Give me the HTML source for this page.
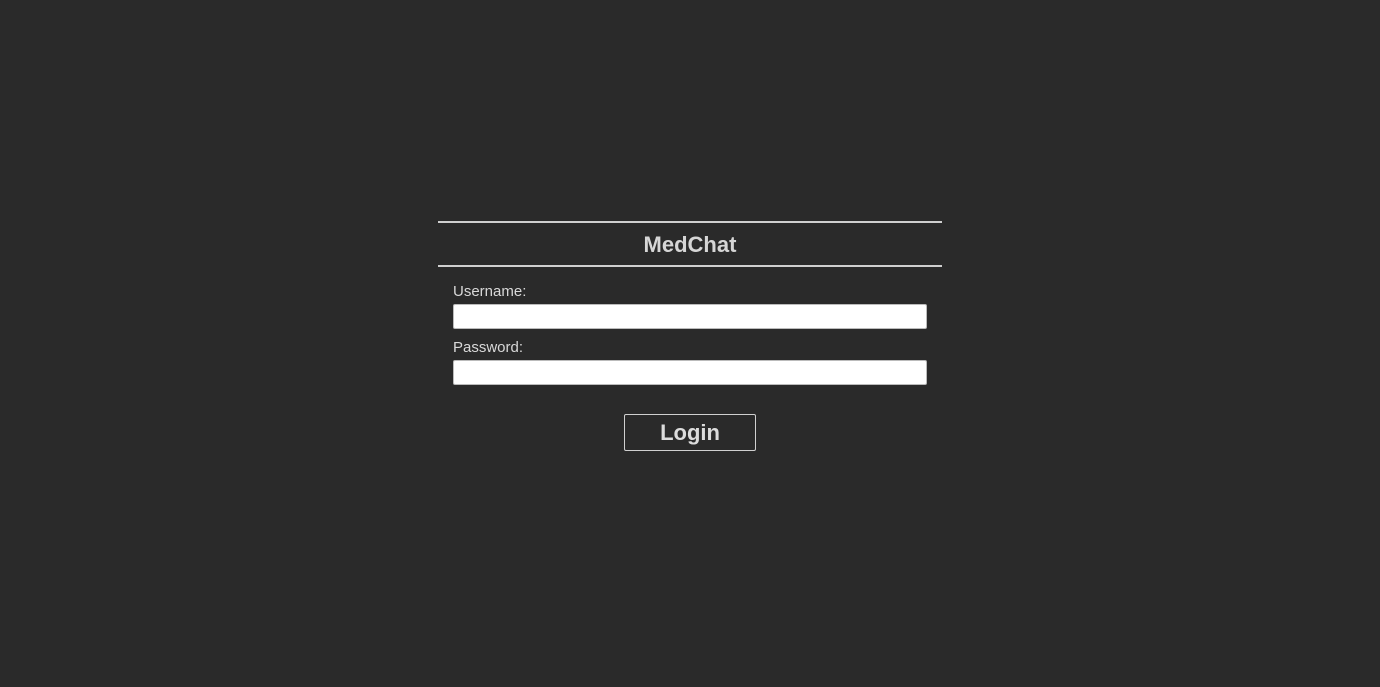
<!DOCTYPE html>
<html><head><style>
html,body{margin:0;padding:0;width:1380px;height:687px;background:#2a2a2a;font-family:"Liberation Sans",sans-serif;color:#d8d8d8;overflow:hidden}
.hr{position:absolute;left:438px;width:504px;height:2px;background:#cfcfcf}
.t{position:absolute;left:438px;width:504px;top:232px;text-align:center;font-size:22px;font-weight:bold;color:#d6d6d6}
.l{position:absolute;left:453px;font-size:15px;color:#d8d8d8}
.i{position:absolute;left:453px;width:472px;height:23px;background:#fff;border:1px solid #bbb;border-radius:2px}
.b{position:absolute;left:624px;top:414px;width:130px;height:35px;border:1px solid #d0d0d0;border-radius:2px;text-align:center;line-height:35px;font-size:22px;font-weight:bold;color:#dcdcdc}
</style></head><body>
<div class="hr" style="top:221px"></div>
<div class="t">MedChat</div>
<div class="hr" style="top:265px"></div>
<div class="l" style="top:283px">Username:</div>
<div class="i" style="top:304px"></div>
<div class="l" style="top:339px">Password:</div>
<div class="i" style="top:360px"></div>
<div class="b">Login</div>
</body></html>
